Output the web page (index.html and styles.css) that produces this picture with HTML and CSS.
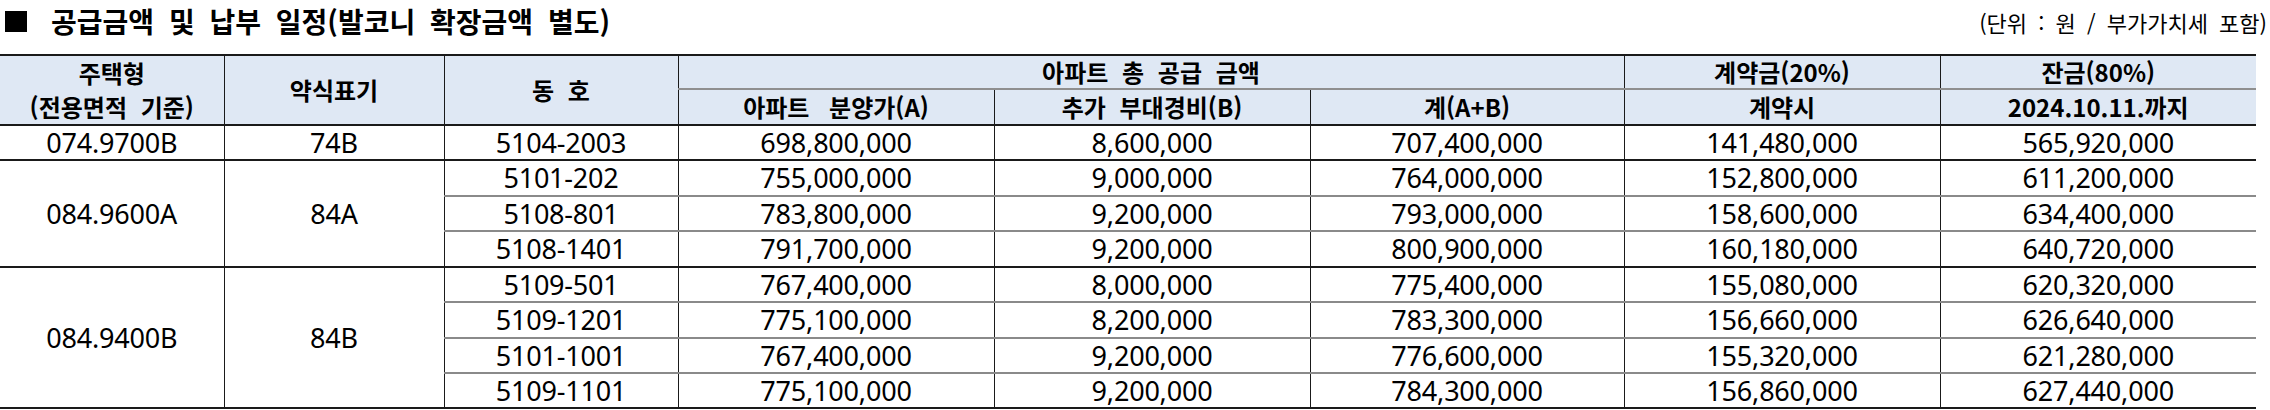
FILE: index.html
```html
<!DOCTYPE html>
<html lang="ko">
<head>
<meta charset="utf-8">
<title>공급금액 및 납부 일정</title>
<link rel="stylesheet" href="styles.css">
</head>
<body>
<div class="page">
  <div class="topbar">
    <h1 class="title"><span class="sq"></span><span class="ttext">공급금액 및 납부 일정(발코니 확장금액 별도)</span></h1>
    <div class="unit">(단위 : 원 / 부가가치세 포함)</div>
  </div>
  <table class="price">
    <colgroup>
      <col class="c1"><col class="c2"><col class="c3"><col class="c4"><col class="c5"><col class="c6"><col class="c7"><col class="c8">
    </colgroup>
    <thead>
      <tr class="h1">
        <th rowspan="2" class="two">주택형<br>(전용면적 기준)</th>
        <th rowspan="2">약식표기</th>
        <th rowspan="2">동 호</th>
        <th colspan="3" class="sub">아파트 총 공급 금액</th>
        <th class="sub">계약금(20%)</th>
        <th class="sub">잔금(80%)</th>
      </tr>
      <tr class="h2">
        <th class="wide">아파트 분양가(A)</th>
        <th>추가 부대경비(B)</th>
        <th>계(A+B)</th>
        <th>계약시</th>
        <th>2024.10.11.까지</th>
      </tr>
    </thead>
    <tbody>
      <tr class="r35 grp">
        <td>074.9700B</td><td>74B</td><td>5104-2003</td><td>698,800,000</td><td>8,600,000</td><td>707,400,000</td><td>141,480,000</td><td>565,920,000</td>
      </tr>
      <tr class="r36">
        <td rowspan="3" class="gb">084.9600A</td><td rowspan="3" class="gb">84A</td><td>5101-202</td><td>755,000,000</td><td>9,000,000</td><td>764,000,000</td><td>152,800,000</td><td>611,200,000</td>
      </tr>
      <tr class="r35">
        <td>5108-801</td><td>783,800,000</td><td>9,200,000</td><td>793,000,000</td><td>158,600,000</td><td>634,400,000</td>
      </tr>
      <tr class="r36 grp">
        <td>5108-1401</td><td>791,700,000</td><td>9,200,000</td><td>800,900,000</td><td>160,180,000</td><td>640,720,000</td>
      </tr>
      <tr class="r35">
        <td rowspan="4" class="gb">084.9400B</td><td rowspan="4" class="gb">84B</td><td>5109-501</td><td>767,400,000</td><td>8,000,000</td><td>775,400,000</td><td>155,080,000</td><td>620,320,000</td>
      </tr>
      <tr class="r36">
        <td>5109-1201</td><td>775,100,000</td><td>8,200,000</td><td>783,300,000</td><td>156,660,000</td><td>626,640,000</td>
      </tr>
      <tr class="r35">
        <td>5101-1001</td><td>767,400,000</td><td>9,200,000</td><td>776,600,000</td><td>155,320,000</td><td>621,280,000</td>
      </tr>
      <tr class="r35 grp">
        <td>5109-1101</td><td>775,100,000</td><td>9,200,000</td><td>784,300,000</td><td>156,860,000</td><td>627,440,000</td>
      </tr>
    </tbody>
  </table>
</div>
</body>
</html>
```

FILE: styles.css
```css
html, body {
  margin: 0;
  padding: 0;
  background: #ffffff;
}

.page {
  width: 2270px;
  color: #000;
  font-family: "Noto Sans CJK KR", "Noto Sans", sans-serif;
}

.topbar {
  display: flex;
  justify-content: space-between;
  align-items: center;
  height: 42px;
  margin-bottom: 12px;
}

.title {
  margin: 0;
  font-size: 28px;
  font-weight: 700;
  line-height: 1;
  display: flex;
  align-items: center;
}

.sq {
  flex: 0 0 auto;
  display: block;
  width: 22px;
  height: 21px;
  background: #000;
  margin-left: 5px;
  margin-right: 24px;
}

.ttext {
  word-spacing: 7px;
}

.unit {
  font-size: 22px;
  line-height: 1;
  margin-right: 3px;
  margin-top: 2px;
  word-spacing: 5px;
}

.price {
  width: 2256px;
  border-collapse: collapse;
  table-layout: fixed;
  border-top: 2px solid #1a1a1a;
  border-bottom: 2px solid #1a1a1a;
}

.c1 { width: 224px; }
.c2 { width: 220px; }
.c3 { width: 234px; }
.c4 { width: 316px; }
.c5 { width: 316px; }
.c6 { width: 314px; }
.c7 { width: 316px; }
.c8 { width: 316px; }

.price th,
.price td {
  padding: 0;
  text-align: center;
  vertical-align: middle;
  border-left: 1px solid #1a1a1a;
  border-right: 1px solid #1a1a1a;
  overflow: hidden;
  white-space: nowrap;
}

.price tr > :first-child { border-left: none; }
.price tr > :last-child { border-right: none; }
.price tr.h2 > :first-child { border-left: 1px solid #1a1a1a; }
.price tr.h2 > :last-child { border-right: none; }

.price th {
  background: #dfe8f4;
  font-size: 24px;
  font-weight: 700;
  line-height: 32px;
  word-spacing: 7px;
}

.price th.wide {
  word-spacing: 13px;
}

.price th.two {
  line-height: 34px;
}

.price thead tr.h1 { height: 32px; }
.price thead tr.h2 { height: 36px; }

.price th.sub {
  border-bottom: 2px solid #8f8f8f;
}

.price thead tr.h2 th,
.price th[rowspan] {
  border-bottom: 2px solid #1a1a1a;
}

.price td {
  font-family: "Noto Sans", "Noto Sans CJK KR", sans-serif;
  font-size: 27px;
  line-height: 30px;
  letter-spacing: -0.2px;
  border-bottom: 2px solid #8a8a8a;
}

.price tr.r35 { height: 35px; }
.price tr.r36 { height: 36px; }

.price tr.grp td,
.price td.gb {
  border-bottom: 2px solid #1a1a1a;
}
```
